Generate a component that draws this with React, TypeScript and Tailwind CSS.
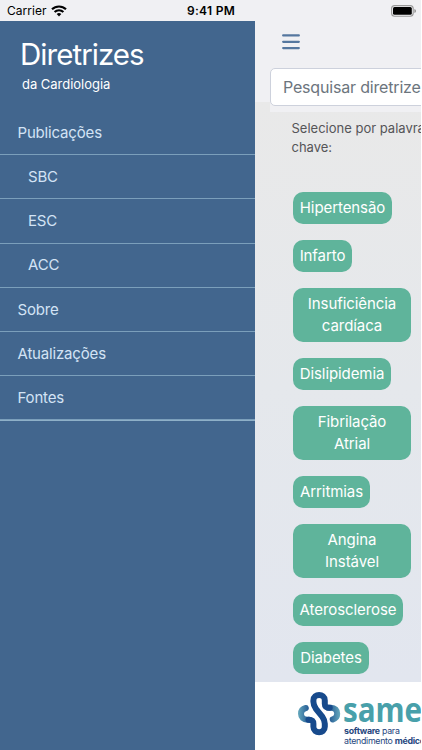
import React from "react";

const menu = [
  { label: "Publicações", sub: false },
  { label: "SBC", sub: true },
  { label: "ESC", sub: true },
  { label: "ACC", sub: true },
  { label: "Sobre", sub: false },
  { label: "Atualizações", sub: false },
  { label: "Fontes", sub: false },
];

const tags = [
  { lines: ["Hipertensão"], size: "w-[99px] h-8" },
  { lines: ["Infarto"], size: "w-[59px] h-8" },
  { lines: ["Insuficiência", "cardíaca"], size: "w-[118px] h-[54px]" },
  { lines: ["Dislipidemia"], size: "w-[98px] h-8" },
  { lines: ["Fibrilação", "Atrial"], size: "w-[118px] h-[54px]" },
  { lines: ["Arritmias"], size: "w-[77px] h-8" },
  { lines: ["Angina", "Instável"], size: "w-[118px] h-[54px]" },
  { lines: ["Aterosclerose"], size: "w-[110px] h-8" },
  { lines: ["Diabetes"], size: "w-[76px] h-8" },
];

function StatusBar() {
  return (
    <header className="flex h-[21px] shrink-0 items-center bg-[#f0f0f3] pl-[7px] text-black">
      <span className="w-[44px] text-[12px] leading-[21px] tracking-[0.05px]">Carrier</span>
      <svg width="16" height="12" viewBox="0 0 16 12" fill="none" stroke="#000" strokeWidth="2.1">
        <path d="M1 4.3a10 10 0 0 1 14 0" />
        <path d="M3.6 7.1a6.2 6.2 0 0 1 8.8 0" />
        <path d="M5.7 9a3.4 3.4 0 0 1 4.6 0L8 11.4Z" fill="#000" stroke="none" />
      </svg>
      <span className="ml-[120px] w-[60px] text-[12px] font-semibold leading-[21px] tracking-[0.3px]">9:41 PM</span>
      <svg className="ml-[144px]" width="26" height="12" viewBox="0 0 26 12">
        <rect x="0.6" y="0.6" width="21.6" height="10.6" rx="3" fill="none" stroke="#999" strokeWidth="1.1" />
        <rect x="2" y="2" width="18.8" height="7.8" rx="1.5" />
        <path d="M23.5 4v4q1.3-.6 1.3-2t-1.3-2" fill="#777" />
      </svg>
    </header>
  );
}

function Sidebar() {
  return (
    <aside className="w-[255px] shrink-0 bg-[#42668e] text-white">
      <div className="h-[90px] pt-[13px]">
        <h1 className="pl-5 text-[29.5px] leading-10 tracking-[-0.95px]">Diretrizes</h1>
        <p className="pl-[22px] text-[13px] leading-5 tracking-[-0.02px]">da Cardiologia</p>
      </div>
      <nav className="border-b border-[#8eb0c8]">
        {menu.map((item) => (
          <div
            key={item.label}
            className={`flex h-[44.2px] items-center border-b border-[#7b9fbb] pt-px text-[15px] tracking-[-0.17px] text-[#d3e3f5] ${item.sub ? "pl-7" : "pl-[17.5px]"}`}
          >
            {item.label}
          </div>
        ))}
      </nav>
    </aside>
  );
}

function SameLogo() {
  return (
    <svg className="mt-[9px] shrink-0" width="46" height="46" viewBox="0 0 46 46" fill="none" strokeWidth="6" strokeLinecap="round">
      <defs>
        <linearGradient id="leftLobe" x1="1" x2="14" y1="23" y2="23" gradientUnits="userSpaceOnUse">
          <stop stopColor="#66a9bd" />
          <stop offset="1" stopColor="#174a8c" />
        </linearGradient>
        <linearGradient id="rightLobe" x1="30" x2="43" y1="23" y2="23" gradientUnits="userSpaceOnUse">
          <stop stopColor="#174a8c" />
          <stop offset="1" stopColor="#66a9bd" />
        </linearGradient>
      </defs>
      <path d="M8.8 17C5.6 17.8 4 19.8 4 22.8c0 3.6 2.5 5.9 6.4 5.9h2" stroke="url(#leftLobe)" />
      <path d="M31 16.8h3c4 0 6.2 2.4 6.2 6 0 3-1.6 4.9-4.5 5.7" stroke="url(#rightLobe)" />
      <path d="M11.5 28.7c3.5 0 4.9 1.2 4.9 4v3.1c0 7.2 11.4 7.2 11.4 0v-3c0-3.3-1-5-2.6-7.3L19 18c-1.7-2.4-2.6-4.4-2.6-7.2V9.4c0-7.2 11.4-7.2 11.4 0v3.4c0 2.8 1.4 4 4.9 4" stroke="#174a8c" />
    </svg>
  );
}

function Footer() {
  return (
    <footer className="flex h-[68px] shrink-0 overflow-hidden bg-white pl-[42px]">
      <SameLogo />
      <div className="w-[90px] shrink-0 pt-[10px] whitespace-nowrap">
        <div className="h-[34px] w-[90px] origin-left scale-x-[0.885] font-['Open_Sans',sans-serif] text-[33.5px] font-bold leading-[34px] tracking-[-0.1px] text-[#48a0aa]">same</div>
        <div className="pl-px text-[8.8px] leading-[10px] tracking-[-0.28px] text-[#27477e]">
          <div><b>software</b> para</div>
          <div>atendimento <b>médico</b></div>
        </div>
      </div>
    </footer>
  );
}

export default function App() {
  return (
    <div className="flex h-[750px] w-[421px] flex-col overflow-hidden bg-[#f0f0f3] font-[Inter,sans-serif]">
      <StatusBar />
      <div className="flex min-h-0 flex-1">
        <Sidebar />
        <main className="flex min-w-0 flex-1 flex-col overflow-hidden">
          <div className="h-[81px] shrink-0 pt-[13px]">
            <svg className="ml-[27px]" width="18" height="16" stroke="#55779f" strokeWidth="2.3" strokeLinecap="round">
              <path d="M1.2 1.4h15.6M1.2 7.8h15.6M1.2 14.1h15.6" />
            </svg>
            <div className="relative ml-[15px] mt-[18px] h-[44px] w-[180px] bg-[#f0f0f3]">
              <div className="flex h-[38px] items-center rounded-[5px] border border-[#cdd1dc] bg-white pl-[12px] text-[16px] tracking-[-0.18px] text-[#6c757d]">
                <span className="whitespace-nowrap">Pesquisar diretrizes</span>
              </div>
            </div>
          </div>
          <section className="flex-1 bg-linear-to-b from-[#e9e9e9] via-[#e5e8ec] to-[#e2e6ef]">
            <p className="h-[90px] pl-[36.5px] pt-[17px] text-[13px] leading-[19px] text-[#555558]">
              <span className="block whitespace-nowrap">Selecione por palavra-</span>
              chave:
            </p>
            <div className="flex flex-col items-start gap-4 pl-[38px]">
              {tags.map((tag) => (
                <button
                  key={tag.lines[0]}
                  className={`flex shrink-0 flex-col items-center justify-center rounded-[10px] bg-[#5fb49b] text-[15px] leading-[22px] tracking-[-0.08px] text-white ${tag.size}`}
                >
                  {tag.lines.map((line) => (
                    <span key={line} className="whitespace-nowrap">{line}</span>
                  ))}
                </button>
              ))}
            </div>
          </section>
          <Footer />
        </main>
      </div>
    </div>
  );
}
